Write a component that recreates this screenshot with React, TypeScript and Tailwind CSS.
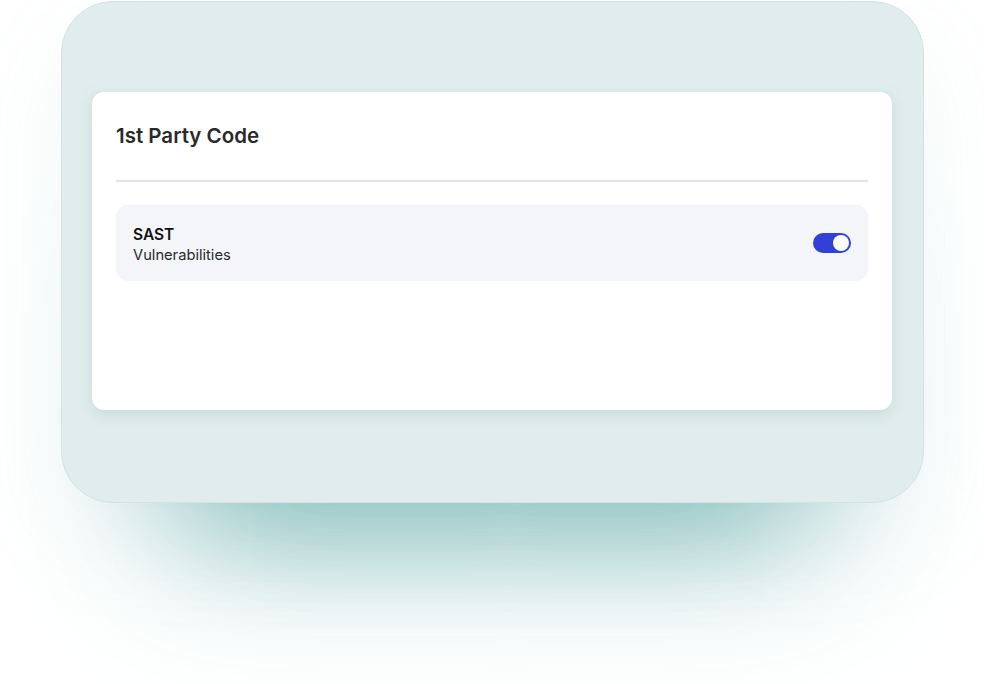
export default function App() {
  return (
    <div className="h-[684px] w-[984px] overflow-hidden bg-white" style={{ fontFamily: 'Inter, "Noto Sans", sans-serif' }}>
      <div className="ml-[61px] mt-px h-[502px] w-[863px] rounded-[52px] border border-[#d3e2e2] bg-[#e1eded] px-[30px] pt-[90px] shadow-[0_150px_140px_-115px_rgba(100,170,170,0.85),0_40px_100px_-10px_rgba(150,195,195,0.15)]">
        <div className="h-[318px] w-[800px] rounded-xl bg-white px-6 pt-[30px] shadow-[0_4px_14px_rgba(120,160,160,0.25)]">
          <h2 className="text-[20.5px] font-semibold leading-7 text-[#2a2a2a]">1st Party Code</h2>
          <div className="mt-[30px] h-[2px] bg-[#e3e3e3]" />
          <div className="mt-[23px] flex h-[76px] items-center justify-between rounded-xl bg-[#f4f5f9] px-[17px]">
            <div className="flex flex-col pt-[3px]">
              <span className="text-[15.5px] font-semibold leading-[21px] text-[#111]">SAST</span>
              <span className="text-[14.7px] leading-[21px] text-[#2a2a2a]">Vulnerabilities</span>
            </div>
            <div className="flex h-5 w-[38px] items-center justify-end rounded-full bg-[#3140d6] pr-[2px]">
              <div className="h-4 w-4 rounded-full bg-white" />
            </div>
          </div>
        </div>
      </div>
    </div>
  );
}
